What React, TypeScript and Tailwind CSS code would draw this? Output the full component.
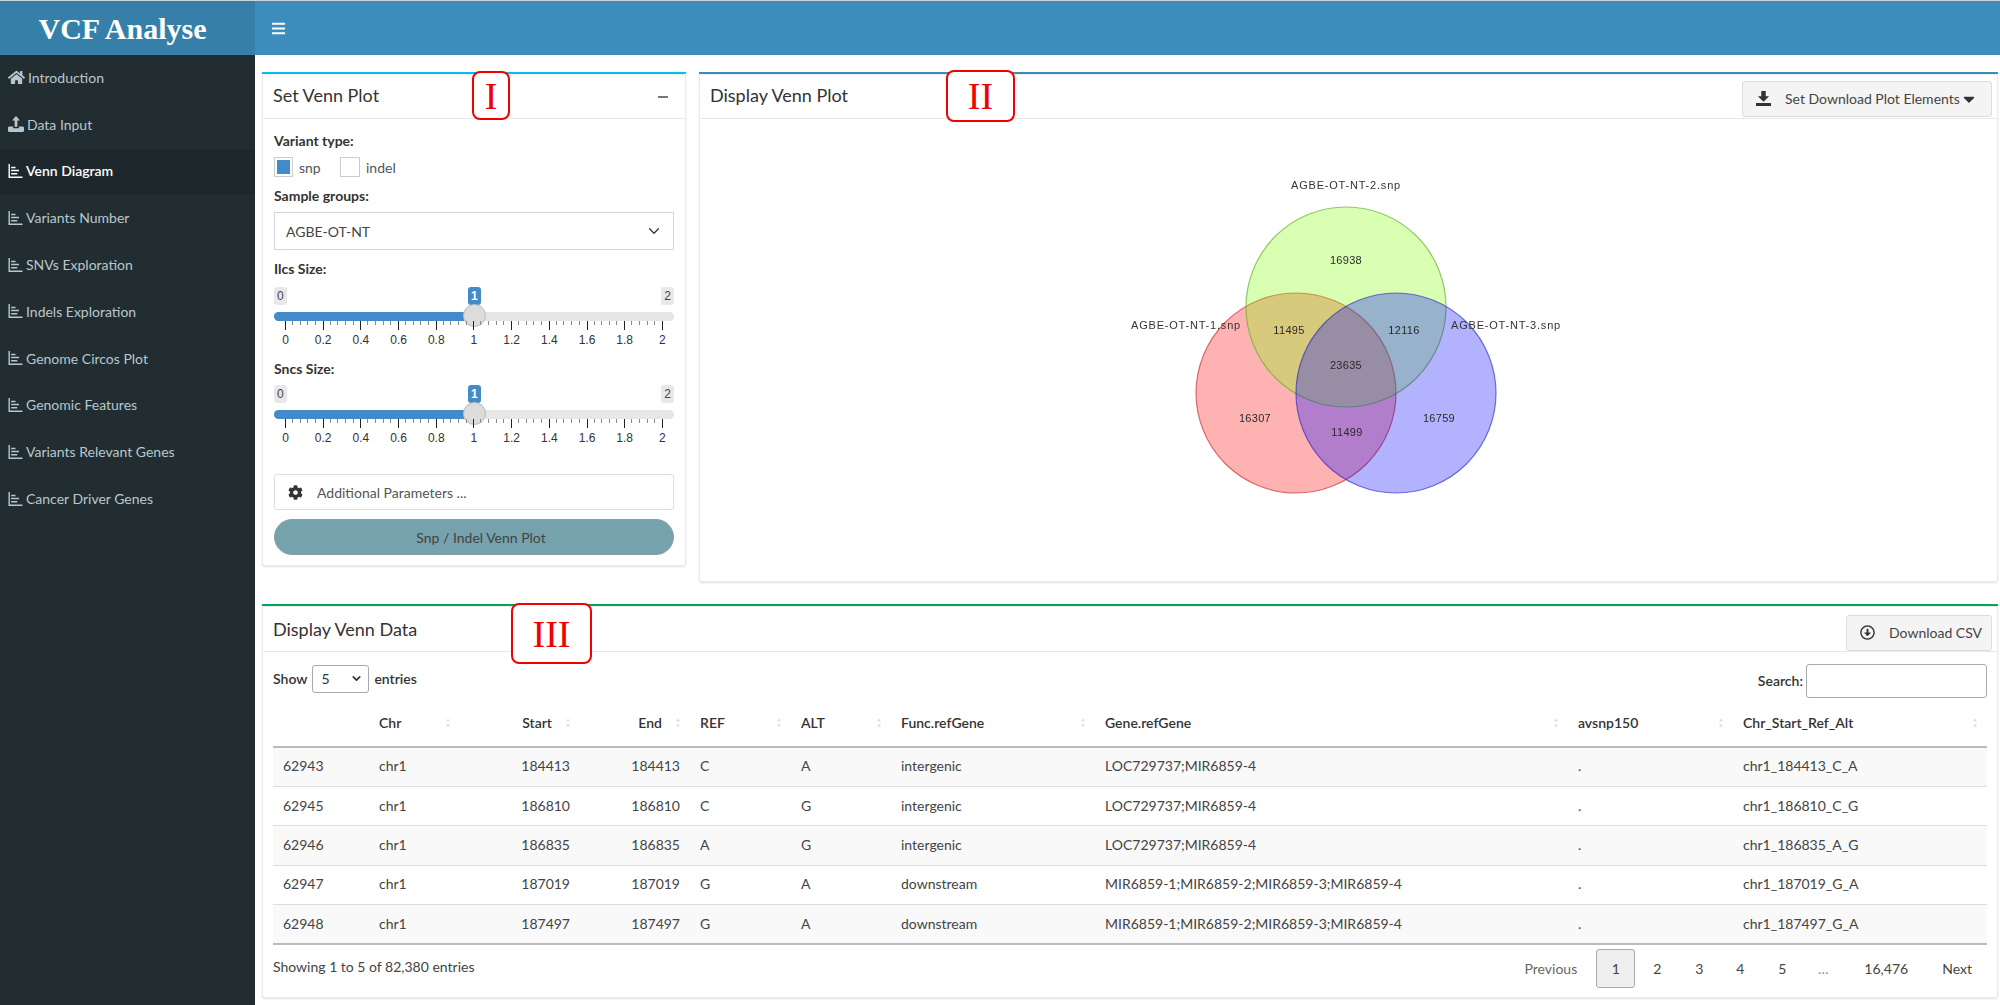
import React from 'react';
import { FaBars, FaCog, FaHome, FaCaretDown, FaRegArrowAltCircleDown } from 'react-icons/fa';
import { ChevronDown } from 'lucide-react';

const navItems = [
  'Introduction',
  'Data Input',
  'Venn Diagram',
  'Variants Number',
  'SNVs Exploration',
  'Indels Exploration',
  'Genome Circos Plot',
  'Genomic Features',
  'Variants Relevant Genes',
  'Cancer Driver Genes',
];

const rows = [
  ['62943', 'chr1', '184413', '184413', 'C', 'A', 'intergenic', 'LOC729737;MIR6859-4', '.', 'chr1_184413_C_A'],
  ['62945', 'chr1', '186810', '186810', 'C', 'G', 'intergenic', 'LOC729737;MIR6859-4', '.', 'chr1_186810_C_G'],
  ['62946', 'chr1', '186835', '186835', 'A', 'G', 'intergenic', 'LOC729737;MIR6859-4', '.', 'chr1_186835_A_G'],
  ['62947', 'chr1', '187019', '187019', 'G', 'A', 'downstream', 'MIR6859-1;MIR6859-2;MIR6859-3;MIR6859-4', '.', 'chr1_187019_G_A'],
  ['62948', 'chr1', '187497', '187497', 'G', 'A', 'downstream', 'MIR6859-1;MIR6859-2;MIR6859-3;MIR6859-4', '.', 'chr1_187497_G_A'],
];

const columns = [
  { name: '', width: 96 },
  { name: 'Chr', width: 91 },
  { name: 'Start', width: 120, right: true },
  { name: 'End', width: 110, right: true },
  { name: 'REF', width: 101 },
  { name: 'ALT', width: 100 },
  { name: 'Func.refGene', width: 204 },
  { name: 'Gene.refGene', width: 473 },
  { name: 'avsnp150', width: 165 },
  { name: 'Chr_Start_Ref_Alt', width: 254 },
];

const scale = ['0', '0.2', '0.4', '0.6', '0.8', '1', '1.2', '1.4', '1.6', '1.8', '2'];

const AxisIcon = ({ className }: { className?: string }) => (
  <svg viewBox="0 0 16 16" className={className} fill="currentColor">
    <path d="M0 0h1.6v14.4H16V16H0z" />
    <path d="M3 3h5v1.8H3zM3 6.6h9v1.8H3zM3 10.2h7V12H3z" />
  </svg>
);

const UploadIcon = ({ className }: { className?: string }) => (
  <svg viewBox="0 0 16 16" className={className} fill="currentColor">
    <path d="M8 0l4 4.4H9.4v6.4H6.6V4.4H4z" />
    <path d="M1.5 10.5h3.6v1.7h5.8v-1.7h3.6c.9 0 1.5.7 1.5 1.5v2.5c0 .9-.6 1.5-1.5 1.5h-13C.6 16 0 15.400 0 14.500V12c0-.8.600-1.500 1.500-1.500z" />
  </svg>
);

const TrayDownloadIcon = ({ className }: { className?: string }) => (
  <svg viewBox="0 0 16 16" className={className} fill="currentColor">
    <path d="M5.600 0h4.800v5.600H14L8 11.400 2 5.600h3.600z" />
    <path d="M0 12.800h16V16H0z" />
  </svg>
);

const RedTag = ({ label, className }: { label: string; className: string }) => (
  <div
    className={`absolute z-10 flex items-center justify-center rounded-lg border-2 border-[#f00000] bg-white font-['Liberation_Serif',serif] text-[38px] leading-none text-[#f00000] ${className}`}
  >
    {label}
  </div>
);

const Slider = () => (
  <div className="relative h-[71px] font-['Liberation_Sans',sans-serif]">
    <div className="flex justify-between text-[12px] leading-[18px] text-[#444]">
      <span className="rounded-[3px] bg-[#e8e8e8] px-[3px]">0</span>
      <span className="rounded-[3px] bg-[#e8e8e8] px-[3px]">2</span>
    </div>
    {/* value bubble and handle sit over the track */}
    <span className="absolute left-[194px] top-0 rounded-[3px] bg-[#428bca] px-[3px] text-[12px] font-bold leading-[18px] text-white">
      1
    </span>
    <div className="mt-[7px] h-[9px] overflow-hidden rounded-full bg-[#e6e6e6]">
      <div className="h-full w-1/2 bg-[#428bca]" />
    </div>
    <div className="absolute left-[189px] top-[17px] h-[23px] w-[23px] rounded-full border border-[#bbb] bg-[#dcdcdc]" />
    <div className="mx-[11px] flex justify-between">
      {scale.map((tick, i) => (
        <div key={tick} className="relative w-px">
          <div className="h-[9px] w-px bg-[#222]" />
          {i < 10 && (
            <div className="absolute left-0 top-0 flex h-[4px] w-[38px] justify-between px-[7px]">
              <div className="h-full w-px bg-[#888]" />
              <div className="h-full w-px bg-[#888]" />
              <div className="h-full w-px bg-[#888]" />
              <div className="h-full w-px bg-[#888]" />
            </div>
          )}
          <span className="absolute left-1/2 top-[10px] -translate-x-1/2 text-[12px] leading-[18px] text-[#333]">{tick}</span>
        </div>
      ))}
    </div>
  </div>
);

const SortArrows = () => (
  <span className="absolute right-[10px] top-1/2 flex -translate-y-1/2 flex-col gap-[3px]">
    <span className="h-0 w-0 border-x-[2.5px] border-b-[3px] border-x-transparent border-b-[#ddd]" />
    <span className="h-0 w-0 border-x-[2.5px] border-t-[3px] border-x-transparent border-t-[#ddd]" />
  </span>
);

const Venn = () => (
  <svg viewBox="0 0 500 370" className="h-[370px] w-[500px] font-['Liberation_Sans',sans-serif] text-[11px] blur-[0.35px]">
    <circle cx="197" cy="243" r="100" fill="#ff0000" fillOpacity="0.3" stroke="#c02020" strokeOpacity="0.6" strokeWidth="1.2" />
    <circle cx="247" cy="157" r="100" fill="#7fff00" fillOpacity="0.3" stroke="#5fae28" strokeOpacity="0.65" strokeWidth="1.2" />
    <circle cx="297" cy="243" r="100" fill="#0000ff" fillOpacity="0.3" stroke="#2020c0" strokeOpacity="0.6" strokeWidth="1.2" />
    <g fill="#333" textAnchor="middle" letterSpacing="0.8">
      <text x="247" y="39">AGBE-OT-NT-2.snp</text>
      <text x="87" y="179">AGBE-OT-NT-1.snp</text>
      <text x="407" y="179">AGBE-OT-NT-3.snp</text>
    </g>
    <g fill="#2a2a2a" textAnchor="middle" letterSpacing="0.3">
      <text x="247" y="114">16938</text>
      <text x="190" y="184">11495</text>
      <text x="305" y="184">12116</text>
      <text x="247" y="219">23635</text>
      <text x="156" y="272">16307</text>
      <text x="340" y="272">16759</text>
      <text x="248" y="286">11499</text>
    </g>
  </svg>
);

export default function App() {
  return (
    <div className="h-[1005px] w-[2000px] overflow-hidden border-t border-[#c9d3d9] bg-white font-['Lato','Noto_Sans',sans-serif] text-[14px] text-[#333]">
      <header className="flex h-[54px]">
        <div className="flex w-[255px] items-center justify-center bg-[#367fa9] pr-[10px] font-['Liberation_Serif',serif] text-[30px] font-bold text-white">
          VCF Analyse
        </div>
        <div className="flex flex-1 items-center bg-[#3c8dbc] pl-[16px]">
          <FaBars className="text-[15px] text-white" />
        </div>
      </header>

      <div className="flex h-[950px]">
        <aside className="w-[255px] shrink-0 bg-[#222d32]">
          {navItems.map((item, i) => (
            <div
              key={item}
              className={`flex h-[46.8px] items-center gap-[3px] pb-[2px] pl-2 text-[14px] ${
                item === 'Venn Diagram' ? 'bg-[#1e282c] font-semibold text-white' : 'text-[#b8c7ce]'
              }`}
            >
              {i === 0 && <FaHome className="text-[17px]" />}
              {i === 1 && <UploadIcon className="h-[16px] w-[16px]" />}
              {i > 1 && <AxisIcon className="h-[14px] w-[15px]" />}
              <span>{item}</span>
            </div>
          ))}
        </aside>

        <main className="flex flex-1 flex-col gap-[22px] pl-[7px] pr-[4px] pt-[17px]">
          <div className="flex items-start gap-[13px]">
            <section className="relative h-[494px] w-[424px] shrink-0 border-t-2 border-[#00c0ef]">
              <div className="h-full rounded-[3px] border border-[#ececec] bg-white shadow-[0_1px_2px_rgba(0,0,0,0.12)]">
                <div className="flex h-[44px] items-center justify-between border-b border-[#e8e8e8] pl-[10px] pr-[17px] text-[18px] text-[#333]">
                  <span className="mb-[3px]">Set Venn Plot</span>
                  <span className="h-[2px] w-[10px] bg-[#777]" />
                </div>
                <div className="px-[11px] pt-[12px]">
                  <div className="text-[14px] font-bold leading-[20px]">Variant type:</div>
                  <div className="mt-[6px] flex h-[20px] items-center text-[14px] text-[#555]">
                    <span className="flex h-[20px] w-[19px] items-center justify-center border border-[#ccc]">
                      <span className="h-[14px] w-[13px] bg-[#428bca]" />
                    </span>
                    <span className="ml-[6px] w-[41px]">snp</span>
                    <span className="h-[20px] w-[20px] border border-[#ccc]" />
                    <span className="ml-[6px]">indel</span>
                  </div>
                  <div className="mt-[9px] pb-[1px] text-[14px] font-bold leading-[20px]">Sample groups:</div>
                  <div className="mt-[5px] flex h-[38px] items-center justify-between border border-[#d2d6de] pl-[11px] pr-[10px] text-[14px] text-[#444]">
                    AGBE-OT-NT
                    <ChevronDown className="h-[18px] w-[18px] text-[#333]" strokeWidth={1.6} />
                  </div>
                  <div className="mt-[9px] pb-[1px] text-[14px] font-bold leading-[20px]">Ilcs Size:</div>
                  <div className="mt-[7px]">
                    <Slider />
                  </div>
                  <div className="mt-[1px] text-[14px] font-bold leading-[20px]">Sncs Size:</div>
                  <div className="mt-[6px]">
                    <Slider />
                  </div>
                  <div className="mt-[18px] flex h-[36px] items-center gap-[14px] rounded-[3px] border border-[#ddd] pl-[13px] text-[14px] text-[#555]">
                    <FaCog className="text-[15px] text-[#333]" />
                    Additional Parameters ...
                  </div>
                  <div className="mt-[9px] flex h-[36px] items-center justify-center rounded-full border border-[#8a9ea3] bg-[#76a2ad] pl-[14px] text-[14px] text-[#444]">
                    Snp / Indel Venn Plot
                  </div>
                </div>
              </div>
              <RedTag label="I" className="left-[210px] -top-[3px] h-[49px] w-[38px]" />
            </section>

            <section className="relative h-[510px] flex-1 border-t-2 border-[#3c8dbc]">
              <div className="h-full rounded-[3px] border border-[#ececec] bg-white shadow-[0_1px_2px_rgba(0,0,0,0.12)]">
                <div className="flex h-[44px] items-center justify-between border-b border-[#e8e8e8] pl-[10px] pr-[5px] text-[18px] text-[#333]">
                  <span className="mb-[3px]">Display Venn Plot</span>
                  <button className="mt-[4px] flex h-[36px] w-[250px] items-center rounded-[3px] border border-[#ddd] bg-[#f4f4f4] pl-[13px] text-[14px] text-[#444]">
                    <TrayDownloadIcon className="h-[15px] w-[15px] text-[#333]" />
                    <span className="ml-[14px]">Set Download Plot Elements</span>
                    <FaCaretDown className="text-[18px] text-[#333]" />
                  </button>
                </div>
                <div className="flex justify-center pt-[31px]">
                  <Venn />
                </div>
              </div>
              <RedTag label="II" className="left-[247px] -top-[4px] h-[52px] w-[69px]" />
            </section>
          </div>

          <section className="relative h-[394px] border-t-2 border-[#00a65a]">
            <div className="h-full rounded-[3px] border border-[#ececec] bg-white shadow-[0_1px_2px_rgba(0,0,0,0.12)]">
              <div className="flex h-[45px] items-center justify-between border-b border-[#e8e8e8] pl-[10px] pr-[5px] text-[18px] text-[#333]">
                Display Venn Data
                <button className="mt-[7px] flex h-[36px] w-[146px] items-center gap-[14px] rounded-[3px] border border-[#ddd] bg-[#f4f4f4] pl-[13px] text-[14px] text-[#444]">
                  <FaRegArrowAltCircleDown className="text-[15px] text-[#333]" />
                  Download CSV
                </button>
              </div>
              <div className="px-[10px]">
                <div className="flex h-[47px] items-center justify-between pt-[10px] text-[14px] font-semibold">
                  <div className="mb-[4px] flex items-center gap-[5px]">
                    Show
                    <span className="flex h-[28px] w-[57px] items-center justify-between rounded-[3px] border border-[#aaa] pl-[8px] pr-[5px] font-normal">
                      5
                      <ChevronDown className="h-[13px] w-[13px]" strokeWidth={3} />
                    </span>
                    entries
                  </div>
                  <div className="flex items-center gap-[3px]">
                    Search:
                    <span className="h-[34px] w-[181px] rounded-[3px] border border-[#aaa]" />
                  </div>
                </div>
                <table className="w-[1714px] table-fixed border-collapse text-[14px]">
                  <colgroup>
                    {columns.map((c) => (
                      <col key={c.name} style={{ width: c.width }} />
                    ))}
                  </colgroup>
                  <thead>
                    <tr className="h-[48px] border-b-2 border-[#bbb]">
                      {columns.map((c) => (
                        <th
                          key={c.name}
                          className={`relative py-0 pl-[10px] font-semibold text-[#333] ${c.right ? 'pr-[28px] text-right' : 'pr-[26px] text-left'}`}
                        >
                          {c.name}
                          {c.name && <SortArrows />}
                        </th>
                      ))}
                    </tr>
                  </thead>
                  <tbody>
                    {rows.map((row, i) => (
                      <tr key={row[0]} className={`h-[39.4px] border-b border-[#ddd] last:border-b-2 last:border-[#bbb] ${i % 2 === 0 || i === 4 ? 'bg-[#f9f9f9]' : 'bg-white'}`}>
                        {row.map((cell, j) => (
                          <td key={j} className={`px-[10px] pb-[2px] pt-0 text-[#444] ${columns[j].right ? 'text-right' : 'text-left'}`}>
                            {cell}
                          </td>
                        ))}
                      </tr>
                    ))}
                  </tbody>
                </table>
                <div className="flex h-[46px] items-center justify-between text-[14px] text-[#444]">
                  <span className="mb-[3px]">Showing 1 to 5 of 82,380 entries</span>
                  <div className="flex items-center pr-[15px] pt-[2px]">
                    <span className="mr-[19px] text-[#666]">Previous</span>
                    <span className="flex h-[39px] w-[39px] items-center justify-center rounded-[3px] border border-[#aaa] bg-[#eee]">1</span>
                    <span className="w-[44px] text-center">2</span>
                    <span className="w-[40px] text-center">3</span>
                    <span className="w-[42px] text-center">4</span>
                    <span className="w-[42px] text-center">5</span>
                    <span className="w-[40px] text-center text-[#888]">…</span>
                    <span className="w-[86px] text-center">16,476</span>
                    <span className="ml-[13px]">Next</span>
                  </div>
                </div>
              </div>
            </div>
            <RedTag label="III" className="left-[249px] -top-[3px] h-[61px] w-[81px]" />
          </section>
        </main>
      </div>
    </div>
  );
}
